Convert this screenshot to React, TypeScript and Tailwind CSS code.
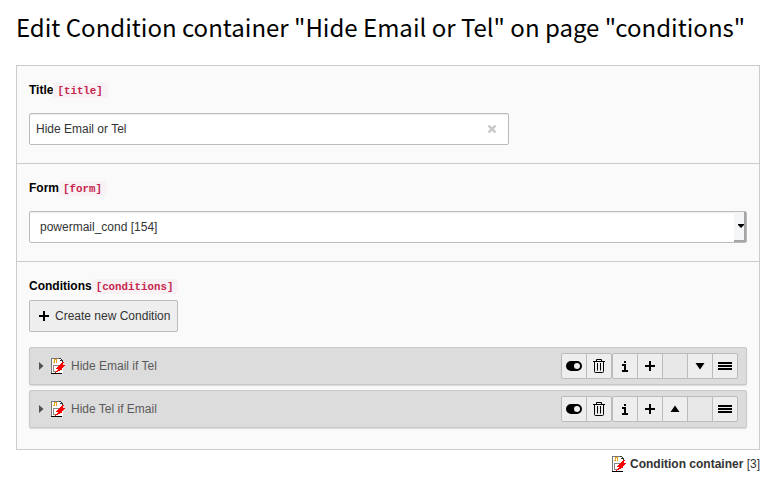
import type { ReactNode } from "react";

function RecordIcon() {
  return (
    <svg width="16" height="16" viewBox="0 0 16 16" shapeRendering="crispEdges" className="block shrink-0">
      <path d="M0 0H9L12 3V15H0Z" fill="#fff" />
      <path d="M0 0H9V1H1V15H0Z" fill="#777" />
      <path d="M9 0H10V1H11V2H12V4H11V3H9V1H8V0Z" fill="#333" />
      <path d="M9 1H10V2H9Z" fill="#fff" />
      <path d="M0 15H11V16H0Z" fill="#000" />
      <path d="M3 1H6V5H5V2H4V5H2V4H3Z" fill="#f5a21b" />
      <path d="M2 7H8V8H3V13H5V14H2Z" fill="#888" />
      <path d="M11 4H13V5H12V7H14V8H13V9H12V10H11V12H9V13H7V14H5V15H4V14H5V13H6V12H7V11H5V10H6V9H7V8H8V7H9V6H10V5H11Z" fill="#f00" />
    </svg>
  );
}

function Plus() {
  return (
    <svg width="16" height="16" viewBox="0 0 16 16" shapeRendering="crispEdges" className="block">
      <path d="M7 3h2v4h4v2H9v4H7V9H3V7h4z" />
    </svg>
  );
}

function Toggle() {
  return (
    <svg width="16" height="16" viewBox="0 0 16 16" className="block">
      <path fillRule="evenodd" d="M5 3h6a5 5 0 0 1 0 10H5A5 5 0 0 1 5 3Zm6 2a3 3 0 1 0 0 6a3 3 0 0 0 0-6Z" />
    </svg>
  );
}

function Trash() {
  return (
    <svg width="16" height="16" viewBox="0 0 16 16" fill="none" stroke="#000" className="block">
      <path d="M2 3.5H14M5.5 3V1.5H10.5V3M3.5 4V13.5Q3.5 14.5 4.5 14.5H11.5Q12.5 14.5 12.5 13.5V4M6.5 5V12.5M9.5 5V12.5" />
    </svg>
  );
}

function Info() {
  return (
    <svg width="16" height="16" viewBox="0 0 16 16" shapeRendering="crispEdges" className="block">
      <path d="M7 3h2v2H7zM5 6h4v6h2v2H5v-2h2V8H5z" />
    </svg>
  );
}

function Triangle({ up }: { up?: boolean }) {
  return (
    <svg width="16" height="16" viewBox="0 0 16 16" className="block">
      <path d={up ? "M3.5 11L8 4.5L12.5 11Z" : "M3.5 5L8 11.5L12.5 5Z"} />
    </svg>
  );
}

function Bars() {
  return (
    <svg width="16" height="16" viewBox="0 0 16 16" shapeRendering="crispEdges" className="block">
      <path d="M1 4h14v2H1zM1 7h14v2H1zM1 10h14v2H1z" />
    </svg>
  );
}

function IconButton({ children, first, last }: { children?: ReactNode; first?: boolean; last?: boolean }) {
  return (
    <div
      className={`flex h-[26px] w-[26px] items-center justify-center border border-[#bbb] ${children ? "bg-[#eee]" : "bg-[#e8e8e8]"} ${first ? "rounded-l-xs" : "-ml-px"} ${last ? "rounded-r-xs" : ""}`}
    >
      {children}
    </div>
  );
}

function Label({ text, code }: { text: string; code: string }) {
  return (
    <div className="flex h-4 items-center leading-4 font-bold text-black">
      <span>{text}</span>
      <code className="rounded-xs bg-[#f9f2f4] pt-px pr-[5px] pl-1 font-['Liberation_Mono',monospace] text-[10.8px] leading-[14px] text-[#c7254e]">
        {code}
      </code>
    </div>
  );
}

function ConditionRow({ title, up }: { title: string; up?: boolean }) {
  return (
    <div className="flex h-[38px] items-center rounded-xs border border-[#c8c8c8] bg-[#dcdcdc] pr-2 pl-[9px] shadow-[0_1px_1px_#0002]">
      <svg width="5" height="8" viewBox="0 0 5 8" className="mr-[7px]">
        <path d="M0 0L4.5 4L0 8Z" fill="#505050" />
      </svg>
      <RecordIcon />
      <span className="ml-1 text-[#5a5a5a]">{title}</span>
      <div className="ml-auto flex">
        <IconButton first><Toggle /></IconButton>
        <IconButton last><Trash /></IconButton>
      </div>
      <div className="flex">
        <IconButton first><Info /></IconButton>
        <IconButton><Plus /></IconButton>
        <IconButton>{up ? <Triangle up /> : null}</IconButton>
        <IconButton>{up ? null : <Triangle />}</IconButton>
        <IconButton last><Bars /></IconButton>
      </div>
    </div>
  );
}

export default function App() {
  return (
    <main className="h-[479px] overflow-hidden bg-white pr-[17px] pl-4 font-['Liberation_Sans',sans-serif] text-[12px] text-[#333]">
      <h1 className="h-[65px] pt-[9px] font-['Noto_Sans_CJK_SC',sans-serif] text-[24px] leading-[36px] whitespace-nowrap text-black">
        Edit Condition container "Hide Email or Tel" on page "conditions"
      </h1>
      <div className="h-[385px] border border-[#ccc] bg-[#fafafa]">
        <section className="h-[98px] border-b border-[#ccc] px-3 pt-4">
          <Label text="Title" code="[title]" />
          <div className="mt-[15px] flex h-8 w-[480px] items-center justify-between rounded-xs border border-[#bbb] bg-white pr-3 pl-1.5 shadow-[inset_0_1px_1px_#00000013]">
            <span>Hide Email or Tel</span>
            <svg width="8" height="8" viewBox="0 0 8 8" stroke="#c8c8c8" strokeWidth="2.3">
              <path d="M0.5 0.5L7.5 7.5M7.5 0.5L0.5 7.5" />
            </svg>
          </div>
        </section>
        <section className="h-[98px] border-b border-[#ccc] px-3 pt-4">
          <Label text="Form" code="[form]" />
          <div className="mt-[15px] flex h-8 items-center justify-between rounded-xs border border-[#bbb] bg-white pl-2.5 shadow-[inset_0_1px_1px_#00000013]">
            <span>powermail_cond [154]</span>
            <div className="flex h-full w-3 items-center justify-center border-r-2 border-b-2 border-[#a5a5a5] bg-[#f3f5f6] pl-1">
              <svg width="6" height="4" viewBox="0 0 6 4" className="shrink-0"><path d="M0 0H6V1L3 4L0 1Z" /></svg>
            </div>
          </div>
        </section>
        <section className="px-3 pt-4">
          <Label text="Conditions" code="[conditions]" />
          <div className="mt-[6px] flex h-8 w-[149px] items-center rounded-xs border border-[#bbb] bg-[#eee] pl-1.5">
            <Plus />
            <span className="ml-[3px] whitespace-nowrap">Create new Condition</span>
          </div>
          <div className="mt-[15px] flex flex-col gap-[5px]">
            <ConditionRow title="Hide Email if Tel" />
            <ConditionRow title="Hide Tel if Email" up />
          </div>
        </section>
      </div>
      <footer className="flex h-[27px] items-center justify-end">
        <RecordIcon />
        <span className="ml-0.5"><b>Condition container</b> [3]</span>
      </footer>
    </main>
  );
}
